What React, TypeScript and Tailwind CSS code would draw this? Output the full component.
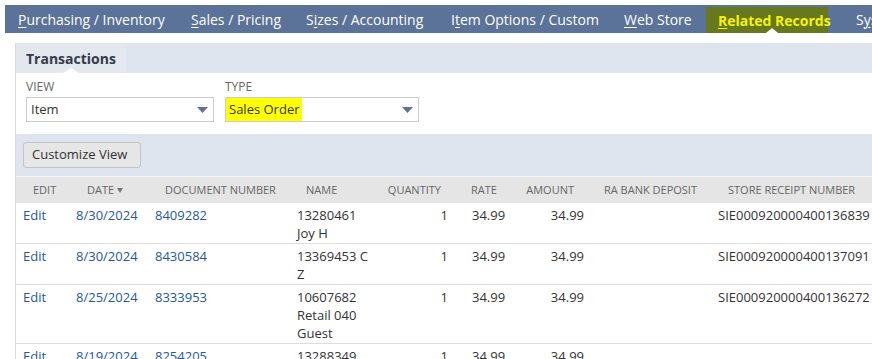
import React from "react";

const NavItem = ({ u, pre, rest, w }: { u: string; pre?: string; rest: string; w: string }) => (
  <div className={`${w} shrink-0 whitespace-nowrap`}>
    {pre}
    <span className="underline underline-offset-2 decoration-1">{u}</span>
    {rest}
  </div>
);

const Arrow = () => (
  <svg width="11" height="6" viewBox="0 0 11 6" className="shrink-0">
    <polygon points="0,0 11,0 5.5,6" fill="#5d7398" />
  </svg>
);

type Row = { date: string; doc: string; name: string[]; store: string };

const rows: Row[] = [
  { date: "8/30/2024", doc: "8409282", name: ["13280461", "Joy H"], store: "SIE000920000400136839" },
  { date: "8/30/2024", doc: "8430584", name: ["13369453 C", "Z"], store: "SIE000920000400137091" },
  { date: "8/25/2024", doc: "8333953", name: ["10607682", "Retail 040", "Guest"], store: "SIE000920000400136272" },
  { date: "8/19/2024", doc: "8254205", name: ["13288349"], store: "" },
];

const cols = "grid grid-cols-[53px_79px_142px_86px_80px_60px_76px_119px_300px]";

export default function App() {
  return (
    <div className="w-[872px] h-[359px] overflow-hidden bg-white pt-[5px] pl-[5px] font-['Open_Sans',sans-serif] text-[13px] text-[#333]">
      {/* top nav */}
      <div className="h-[28px] w-[900px] bg-[#5b7299] flex items-stretch pl-[13px] text-[14px] text-white">
        <div className="flex items-center">
          <NavItem w="w-[173px]" u="P" rest="urchasing / Inventory" />
          <NavItem w="w-[115px]" u="S" rest="ales / Pricing" />
          <NavItem w="w-[145px]" pre="S" u="i" rest="zes / Accounting" />
          <NavItem w="w-[173px]" pre="I" u="t" rest="em Options / Custom" />
          <NavItem w="w-[82px]" u="W" rest="eb Store" />
        </div>
        <div className="relative mt-[2px] w-[122px] shrink-0 bg-[#68781c] pl-[12px] flex items-center font-bold text-[#f6f500] whitespace-nowrap">
          <span className="underline underline-offset-2 decoration-1">R</span>elated Records
          <div className="absolute bottom-0 left-[60px] w-0 h-0 border-l-[6px] border-r-[6px] border-b-[5px] border-l-transparent border-r-transparent border-b-white" />
        </div>
        <div className="ml-[28px] flex items-center whitespace-nowrap">
          S<span className="underline underline-offset-2 decoration-1">y</span>stem
        </div>
      </div>

      {/* panel */}
      <div className="mt-[10px] ml-[10px] w-[900px] border-l border-[#d6dbe3]">
        <div className="h-[30px] bg-[#dfe5ee] flex">
          <div className="relative w-[110px] bg-[#e3e7ee] pl-[10px] flex items-center font-bold text-[14px] text-[#333b4a]">
            Transactions
            <div className="absolute bottom-0 left-[47px] w-0 h-0 border-l-[8px] border-r-[8px] border-b-[5px] border-l-transparent border-r-transparent border-b-white" />
          </div>
        </div>

        <div className="h-[61px] bg-white flex pl-[10px] pt-[6px] gap-[11px]">
          <div className="flex flex-col">
            <div className="text-[12px] leading-[16px] text-[#666] h-[16px]">VIEW</div>
            <div className="mt-[2px] w-[188px] h-[25px] border border-[#cccccc] flex items-center justify-between pl-[4px] pr-[5px]">
              <span>Item</span>
              <Arrow />
            </div>
          </div>
          <div className="flex flex-col">
            <div className="text-[12px] leading-[16px] text-[#666] h-[16px]">TYPE</div>
            <div className="mt-[2px] w-[194px] h-[25px] border border-[#cccccc] flex items-center justify-between pr-[5px]">
              <span className="bg-[#ffff00] h-full flex items-center pl-[3px] pr-[2px]">Sales Order</span>
              <Arrow />
            </div>
          </div>
        </div>

        <div className="h-[42px] bg-[#dfe5ee] pl-[7px] pt-[8px]">
          <div className="w-[118px] h-[26px] bg-[#e6e6e6] border border-[#c4c4c4] rounded-[3px] flex items-center pl-[8px] text-[13px] text-[#333]">
            Customize View
          </div>
        </div>
        <div className="h-[1px] bg-[#f3f5f8]" />

        {/* table header */}
        <div className={`${cols} h-[26px] bg-[#e5e5e5] items-center text-[11px] text-[#666]`}>
          <div className="pl-[17px]">EDIT</div>
          <div className="pl-[18px] flex items-center gap-[3px]">
            DATE
            <svg width="6" height="5" viewBox="0 0 6 5"><polygon points="0,0 6,0 3,5" fill="#777" /></svg>
          </div>
          <div className="pl-[17px] whitespace-nowrap">DOCUMENT NUMBER</div>
          <div className="pl-[16px]">NAME</div>
          <div className="pr-[15px] text-right">QUANTITY</div>
          <div className="pl-[15px]">RATE</div>
          <div className="pr-[18px] text-right">AMOUNT</div>
          <div className="pl-[12px] whitespace-nowrap">RA BANK DEPOSIT</div>
          <div className="pl-[17px] whitespace-nowrap">STORE RECEIPT NUMBER</div>
        </div>

        {/* rows */}
        {rows.map((r, i) => (
          <div key={i} className={`${cols} bg-white border-b border-[#dddddd] pt-[3px] pb-[1px] leading-[18px]`}>
            <div className="pl-[7px] text-[#24589c]">Edit</div>
            <div className="pl-[7px] text-[#24589c]">{r.date}</div>
            <div className="pl-[7px] text-[#24589c]">{r.doc}</div>
            <div className="pl-[7px] whitespace-nowrap">
              {r.name.map((n, j) => (
                <div key={j}>{n}</div>
              ))}
            </div>
            <div className="pr-[8px] text-right">1</div>
            <div className="pl-[16px]">34.99</div>
            <div className="pr-[8px] text-right">34.99</div>
            <div />
            <div className="pl-[7px]">{r.store}</div>
          </div>
        ))}
      </div>
    </div>
  );
}
